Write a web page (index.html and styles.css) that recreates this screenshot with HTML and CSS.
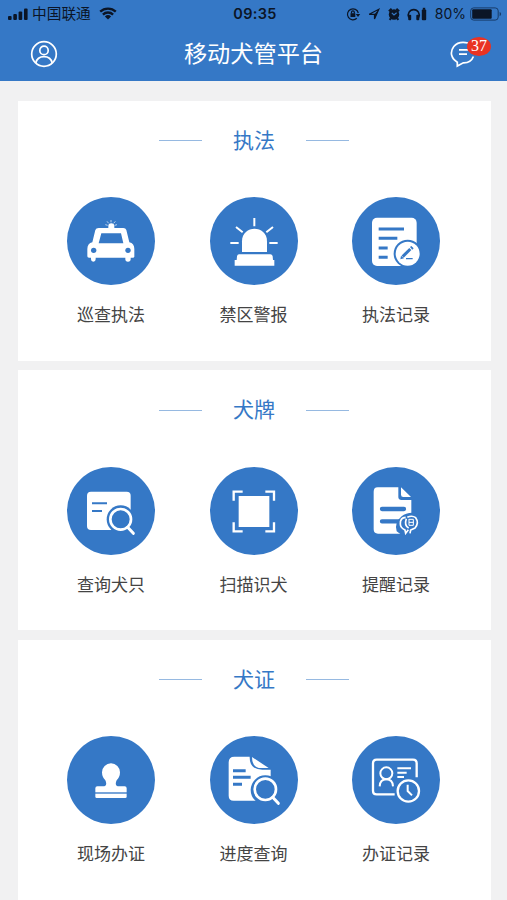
FILE: index.html
```html
<!DOCTYPE html>
<html lang="zh-CN">
<head>
    <meta charset="UTF-8">
    <meta name="viewport" content="width=device-width, initial-scale=1.0">
    <title>移动犬管平台</title>
    <link rel="stylesheet" href="styles.css">
</head>
<body>
    <header class="header">
        <div class="status-bar">
            <div class="status-left">
                <svg class="signal" viewBox="0 0 20 12">
                    <rect x="0" y="8" width="3.6" height="4" rx="1"/>
                    <rect x="5.3" y="6" width="3.6" height="6" rx="1"/>
                    <rect x="10.6" y="3.5" width="3.6" height="8.5" rx="1"/>
                    <rect x="16" y="0.5" width="3.6" height="11.5" rx="1"/>
                </svg>
                <span class="carrier">中国联通</span>
                <svg class="wifi" viewBox="0 0 18 13">
                    <path d="M1.2 4.7a11.2 11.2 0 0 1 15.6 0M3.9 7.6a7.3 7.3 0 0 1 10.2 0"/>
                    <path class="solid" d="M9 12.6L5.9 9.5a4.5 4.5 0 0 1 6.2 0z"/>
                </svg>
            </div>
            <span class="time">09:35</span>
            <div class="status-right">
                <svg class="status-icons" viewBox="0 0 82 14">
                    <path class="line" d="M10.8 11.3A5.5 5.5 0 1 1 12.3 6"/>
                    <path d="M9.8 7h4.4L12 10zM4.5 6.3h4.8V10H4.5z"/>
                    <path class="line" d="M5.5 6.500V5.2a1.4 1.4 0 0 1 2.8 0v1.3"/>
                    <path class="line" d="M23.2 7.3L32.8 2.3L28.5 12V7.3z"/>
                    <path d="M28.5 12V7.3L32.800 2.300z"/>
                    <circle cx="48" cy="7.5" r="5.2"/>
                    <path class="thick" d="M42.9 4.2l2.7-2.5M53.1 4.2l-2.7-2.5M44.8 11.4l-1.200 1.4M51.2 11.4l1.2 1.4"/>
                    <path class="hand" d="M45.8 5.8L48 8l2.6-2.2"/>
                    <path class="arc" d="M62.8 10.5A5.5 5.5 0 1 1 72.7 10.5"/>
                    <rect x="62.2" y="7.8" width="3" height="5.4" rx="1"/>
                    <rect x="70.3" y="7.8" width="3" height="5.4" rx="1"/>
                    <rect x="75.8" y="2.4" width="4.4" height="10.9" rx="1"/>
                    <rect x="76.8" y="0.8" width="2.4" height="2"/>
                </svg>
                <span class="percent">80%</span>
                <svg class="battery" viewBox="0 0 32 14">
                    <rect class="case" x="0.7" y="0.9" width="27.5" height="12.2" rx="3"/>
                    <rect x="2.2" y="2.3" width="19.5" height="9.4" rx="1"/>
                    <path class="tip" d="M29.6 5v4.2q1.5-.6 1.5-2.1T29.6 5z"/>
                </svg>
            </div>
        </div>
        <div class="nav-bar">
            <svg class="user-icon" viewBox="0 0 28 28">
                <circle cx="14" cy="14" r="12.3"/>
                <circle cx="14" cy="10.4" r="4.2"/>
                <path d="M5.8 23q1.4-6.3 8.2-6.3T22.2 23"/>
            </svg>
            <h1>移动犬管平台</h1>
            <div class="message">
                <svg class="message-icon" viewBox="0 0 28 28">
                    <path d="M19 3Q9.5.8 4.8 6.5C.3 12.5 2.5 18.8 8.3 22.2V26l6-3.2Q22 23 24.4 16.5"/>
                    <path d="M10 9.8h10M10 14.2h8"/>
                </svg>
                <span class="badge">37</span>
            </div>
        </div>
    </header>

    <main class="content">
        <section class="card">
            <h2><span>执法</span></h2>
            <div class="grid">
                <a class="item">
                    <svg class="icon" viewBox="22 21 264 264">
                        <path class="fill" fill-rule="evenodd" d="M117 114H191Q198 114 200 120L209 157Q224 160 224 177V200Q224 203 219 203H213V208Q213 215 205 215T197 208V203H108V208Q108 215 101 215T94 208V203H88Q83 203 83 199V177Q83 160 98 157L107 120Q109 114 117 114ZM125 130L117 160H191L184 130Z"/>
                        <path class="fill" d="M146 116V108Q146 100 155 100T164 108V116Z"/>
                        <circle class="hole" cx="102" cy="181" r="8"/>
                        <circle class="hole" cx="205" cy="181" r="8"/>
                        <path class="thin" d="M154 97V90M147 100L142 94M162 100L167 94M144 106L137 104M165 106L172 104"/>
                    </svg>
                    <span>巡查执法</span>
                </a>
                <a class="item">
                    <svg class="icon" viewBox="21 21 264 264">
                        <path class="fill" d="M117 186V154C117 104 192 104 192 154V186Z"/>
                        <path class="fill" d="M108 193H202Q208 193 209 199L210 210H214V227H95V210H101L102 199Q103 193 108 193Z"/>
                        <path class="stroke" d="M154 84V109M99 111L119 127M210 111L190 127M82 159H107M199 159H224"/>
                    </svg>
                    <span>禁区警报</span>
                </a>
                <a class="item">
                    <svg class="icon" viewBox="20 21 264 264">
                        <rect class="fill" x="80" y="83" width="134" height="145" rx="15"/>
                        <path class="mark" d="M100 117H176M100 145H156M100 174H127M100 202H127"/>
                        <circle class="hole" cx="187" cy="191" r="42"/>
                        <circle class="fill" cx="187" cy="191" r="36"/>
                        <path class="mark" d="M172 200L195 177"/>
                        <path class="hole" d="M167 197L176 205L165 208ZM194 171L198 168L205 175L201 179Z"/>
                        <path class="mark-thin" d="M182 206H202"/>
                    </svg>
                    <span>执法记录</span>
                </a>
            </div>
        </section>

        <section class="card">
            <h2><span>犬牌</span></h2>
            <div class="grid">
                <a class="item">
                    <svg class="icon" viewBox="22 21 264 264">
                        <rect class="fill" x="82" y="95" width="131" height="115" rx="12"/>
                        <path class="mark-mid" d="M97 130H142M97 153H127"/>
                        <circle class="hole" cx="183" cy="178" r="42"/>
                        <circle class="ring" cx="183" cy="178" r="31"/>
                        <path class="handle" d="M204 202L221 220"/>
                    </svg>
                    <span>查询犬只</span>
                </a>
                <a class="item">
                    <svg class="icon" viewBox="21 21 264 264">
                        <rect class="fill" x="107" y="108" width="92" height="93"/>
                        <path class="bracket" d="M92 122V95H119M187 95H213V122M92 187V214H119M187 214H213V187"/>
                    </svg>
                    <span>扫描识犬</span>
                </a>
                <a class="item">
                    <svg class="icon" viewBox="20 21 264 264">
                        <path class="fill" d="M97 82H159V112Q160 120 168 120H198V221H98Q85 221 85 208V95Q85 82 97 82ZM167 82L197 111H174Q167 111 167 104Z"/>
                        <path class="mark-wide" d="M110 147H176M110 184H165"/>
                        <path class="hole" d="M169 169Q181 158 201 158Q226 161 226 185Q226 205 209 221L177 231L154 214Q146 188 169 169Z"/>
                        <path class="badge-ring" d="M181 172Q164 173 165 192Q165 203 179 210L181 220L189 209M186 172Q200 165 211 173Q222 188 209 204L196 210L194 220M183 176Q176 196 190 204"/>
                        <path class="badge-lines" d="M190 178H204V196H191V178M191 187H205"/>
                    </svg>
                    <span>提醒记录</span>
                </a>
            </div>
        </section>

        <section class="card">
            <h2><span>犬证</span></h2>
            <div class="grid">
                <a class="item">
                    <svg class="icon" viewBox="22 19 264 264">
                        <path class="fill" d="M107 187V176Q107 170 113 170H134Q144 166 137 152Q127 142 127 128A27 27 0 0 1 181 128Q181 142 171 152Q164 166 174 170H195Q201 170 201 176V187Z"/>
                        <path class="fill" d="M107 193H201V201Q201 205 197 205H111Q107 205 107 201Z"/>
                        <path class="thin" d="M107 190H201"/>
                    </svg>
                    <span>现场办证</span>
                </a>
                <a class="item">
                    <svg class="icon" viewBox="21 19 264 264">
                        <path class="fill" d="M94 81H140Q139 120 178 120H203V213H92Q77 213 77 198V98Q77 81 94 81ZM147 82L197 115H176Q147 116 147 82Z"/>
                        <path class="mark" d="M90 123H128M90 143H143M90 164H117"/>
                        <circle class="hole" cx="187" cy="181" r="44"/>
                        <circle class="ring" cx="187" cy="179" r="32"/>
                        <path class="handle" d="M209 203L226 221"/>
                    </svg>
                    <span>进度查询</span>
                </a>
                <a class="item">
                    <svg class="icon" viewBox="20 19 264 264">
                        <path class="outline" d="M148 194H94Q83 194 83 183V101Q83 90 94 90H203Q214 90 214 101V143"/>
                        <circle class="stroke" cx="123" cy="131" r="18"/>
                        <path class="stroke" d="M103 170Q104 149 123 149T143 170M156 116H197M156 129H184M156 142H176"/>
                        <circle class="outline" cx="189" cy="184" r="32"/>
                        <path class="stroke" d="M187 165V184L200 197"/>
                    </svg>
                    <span>办证记录</span>
                </a>
            </div>
        </section>
    </main>
</body>
</html>
```

FILE: styles.css
```css
* {
    box-sizing: border-box;
}
body {
    margin: 0;
    height: 900px;
    overflow: hidden;
    background-color: #f1f1f2;
    color: #444;
    font-family: "Noto Sans CJK SC", sans-serif;
}
.header {
    height: 81px;
    background-color: #3578c6;
}
.status-bar {
    display: grid;
    grid-template-columns: 1fr auto 1fr;
    align-items: center;
    height: 27px;
    padding: 0 5px 0 8px;
    color: #0b1526;
    fill: #0b1526;
}
.status-left, .status-right {
    display: flex;
    align-items: center;
}
.status-right {
    justify-content: flex-end;
}
.signal {
    width: 20px;
    height: 12px;
}
.carrier {
    margin-left: 4px;
    padding-bottom: 2px;
    font-size: 14.7px;
    line-height: 25px;
}
.wifi {
    width: 18px;
    height: 13px;
    margin-left: 8px;
    fill: none;
    stroke: #0b1526;
    stroke-width: 2.3;
}
.wifi .solid {
    fill: #0b1526;
    stroke: none;
}
.time {
    font: 600 14.5px/27px Inter, sans-serif;
    letter-spacing: 0.3px;
}
.status-icons {
    width: 82px;
    height: 14px;
}
.status-icons .line, .status-icons .arc, .status-icons .thick, .status-icons .hand {
    fill: none;
    stroke: #0b1526;
    stroke-width: 1.2;
}
.status-icons .arc {
    stroke-width: 1.6;
}
.status-icons .thick {
    stroke-width: 2;
}
.status-icons .hand {
    stroke: #3578c6;
}
.percent {
    margin-left: 7px;
    font: 14px/27px Inter, sans-serif;
}
.battery {
    width: 32px;
    height: 14px;
    margin-left: 4px;
}
.battery .case {
    fill: none;
    stroke: #173b68;
    stroke-width: 1;
}
.battery .tip {
    fill: #173b68;
}
.nav-bar {
    display: grid;
    grid-template-columns: 60px 1fr 58px;
    align-items: center;
    height: 53px;
    padding-left: 30px;
}
.nav-bar h1 {
    margin: 0;
    padding: 0 32px 3px 0;
    color: #fff;
    font-size: 23.2px;
    font-weight: 400;
    line-height: 50px;
    text-align: center;
}
.user-icon, .message-icon {
    display: block;
    width: 28px;
    height: 28px;
    fill: none;
    stroke: #fff;
    stroke-width: 1.7;
}
.message {
    position: relative;
    width: 28px;
}
.badge {
    position: absolute;
    top: -3px;
    left: 18px;
    width: 24px;
    height: 19px;
    border-radius: 50%;
    background-color: #e93323;
    color: #fff;
    font: 16px/18px "Liberation Serif", serif;
    text-align: center;
}
.content {
    display: flex;
    flex-direction: column;
    gap: 9.7px;
    padding: 19.5px 16.5px 0 17.5px;
}
.card {
    flex: none;
    height: 260px;
    background-color: #fff;
}
.card h2 {
    display: flex;
    align-items: center;
    justify-content: center;
    gap: 31px;
    height: 80px;
    margin: 0;
    color: #3578c6;
    font-size: 21px;
    font-weight: 400;
}
.card h2 span {
    padding-bottom: 4px;
}
.card h2::before, .card h2::after {
    content: "";
    width: 43px;
    height: 1px;
    background-color: #96b9e1;
}
.grid {
    display: grid;
    grid-template-columns: repeat(3, 142.5px);
    justify-content: center;
    padding: 16.5px 1px 0 0;
}
.item {
    display: flex;
    flex-direction: column;
    align-items: center;
    gap: 16px;
    font-size: 17px;
    line-height: 25px;
}
.icon {
    width: 88px;
    height: 88px;
    border-radius: 50%;
    background-color: #3578c6;
    fill: none;
}
.icon .fill {
    fill: #fff;
}
.icon .hole {
    fill: #3578c6;
}
.icon .stroke, .icon .outline, .icon .thin, .icon .ring, .icon .handle, .icon .bracket, .icon .badge-ring {
    stroke: #fff;
    stroke-width: 6;
}
.icon .outline, .icon .bracket {
    stroke-width: 7;
}
.icon .thin {
    stroke-width: 2;
}
.icon .ring {
    stroke-width: 8;
}
.icon .handle {
    stroke-width: 9;
    stroke-linecap: round;
}
.icon .badge-ring {
    stroke-width: 5;
}
.icon .mark, .icon .mark-mid, .icon .mark-wide, .icon .mark-thin, .icon .badge-lines {
    stroke: #3578c6;
    stroke-width: 9;
}
.icon .mark-mid {
    stroke-width: 6;
}
.icon .mark-wide {
    stroke-width: 13;
    stroke-linecap: round;
}
.icon .mark-thin {
    stroke-width: 4;
}
.icon .badge-lines {
    stroke: #fff;
    stroke-width: 3;
}
```
